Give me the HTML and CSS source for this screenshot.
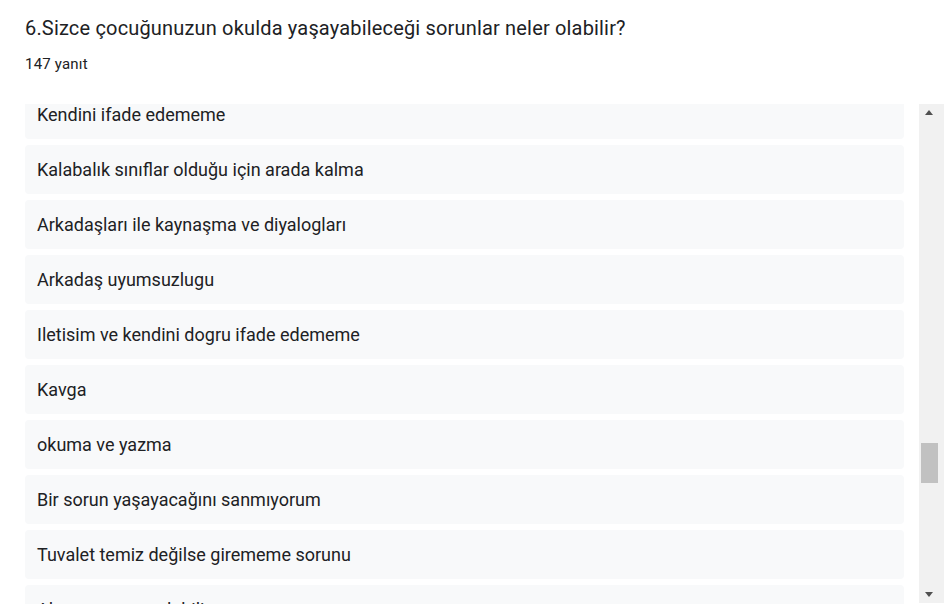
FILE: index.html
```html
<!DOCTYPE html>
<html lang="tr">
<head>
<meta charset="utf-8">
<link rel="stylesheet" href="styles.css">
</head>
<body>
<div class="header">
  <div class="title">6.Sizce çocuğunuzun okulda yaşayabileceği sorunlar neler olabilir?</div>
  <div class="count">147 yanıt</div>
</div>
<div class="panel">
  <div class="viewport">
    <div class="list">
      <div class="item">Kendini ifade edememe</div>
      <div class="item">Kalabalık sınıflar olduğu için arada kalma</div>
      <div class="item">Arkadaşları ile kaynaşma ve diyalogları</div>
      <div class="item">Arkadaş uyumsuzlugu</div>
      <div class="item">Iletisim ve kendini dogru ifade edememe</div>
      <div class="item">Kavga</div>
      <div class="item">okuma ve yazma</div>
      <div class="item">Bir sorun yaşayacağını sanmıyorum</div>
      <div class="item">Tuvalet temiz değilse girememe sorunu</div>
      <div class="item">Alışma sorunu olabilir</div>
    </div>
  </div>
  <div class="scrollbar">
    <div class="arrow up"></div>
    <div class="track">
      <div class="thumb"></div>
    </div>
    <div class="arrow down"></div>
  </div>
</div>
</body>
</html>
```
FILE: styles.css
```css
html, body {
  margin: 0;
  padding: 0;
  background: #ffffff;
}
body {
  font-family: Roboto, "Liberation Sans", Arial, sans-serif;
  color: #202124;
  width: 944px;
  height: 608px;
  overflow: hidden;
}
.header {
  padding: 14px 25px 0 25px;
}
.title {
  font-size: 20px;
  line-height: 28px;
  letter-spacing: 0.17px;
}
.count {
  margin-top: 12px;
  font-size: 15px;
  line-height: 20px;
  letter-spacing: 0.2px;
}
.panel {
  margin-top: 30px;
  display: flex;
  height: 500px;
}
.viewport {
  margin-left: 25px;
  width: 879px;
  height: 500px;
  overflow: hidden;
}
.list {
  margin-top: -14px;
  display: flex;
  flex-direction: column;
  gap: 6px;
}
.item {
  background: #f8f9fa;
  border-radius: 4px;
  height: 49px;
  line-height: 49px;
  padding: 0 12px;
  font-size: 18px;
  white-space: nowrap;
}
.scrollbar {
  margin-left: 15px;
  width: 25px;
  height: 499px;
  background: #f1f1f1;
  display: flex;
  flex-direction: column;
}
.arrow {
  height: 17px;
  display: flex;
  align-items: center;
  justify-content: center;
  padding-right: 6px;
}
.arrow::before {
  content: "";
  width: 0;
  height: 0;
  border-left: 4.5px solid transparent;
  border-right: 4.5px solid transparent;
}
.arrow.up::before {
  border-bottom: 5px solid #505050;
}
.arrow.down::before {
  border-top: 5px solid #505050;
}
.track {
  flex: 1;
  padding-top: 322px;
}
.thumb {
  margin-left: 2px;
  width: 17px;
  height: 40px;
  background: #c1c1c1;
}
```
